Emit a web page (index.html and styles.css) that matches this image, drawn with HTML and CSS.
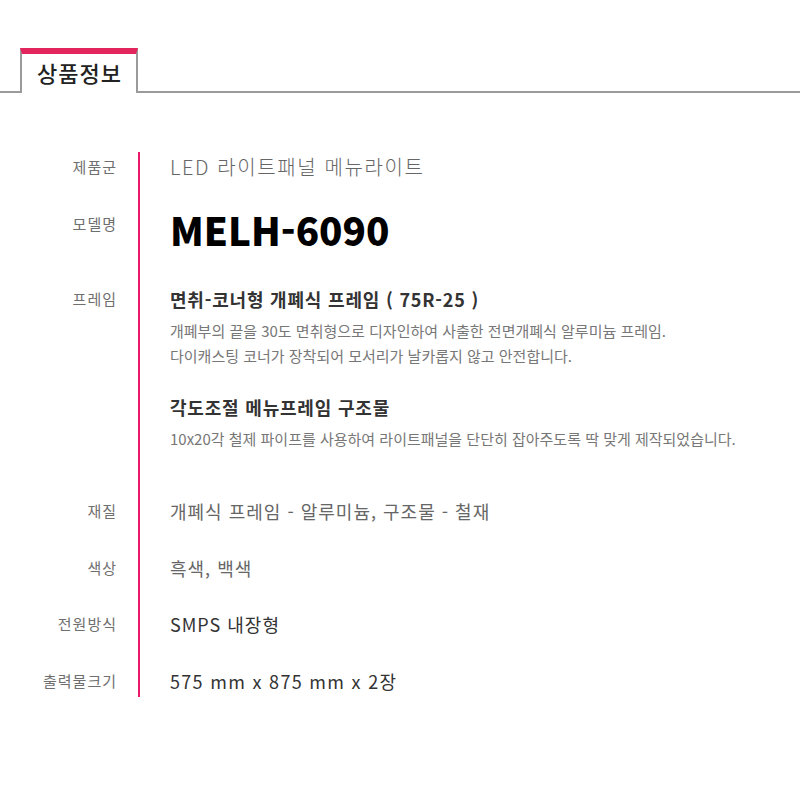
FILE: index.html
```html
<!DOCTYPE html>
<html lang="ko">
<head>
<meta charset="utf-8">
<title>상품정보</title>
<link rel="stylesheet" href="styles.css">
</head>
<body>
<div class="tabs">
  <div class="tab-line short"></div>
  <div class="tab">상품정보</div>
  <div class="tab-line"></div>
</div>

<div class="specs">
  <div class="row r1">
    <div class="label">제품군</div>
    <div class="value light">LED 라이트패널 메뉴라이트</div>
  </div>
  <div class="row r2">
    <div class="label">모델명</div>
    <div class="value model">MELH-6090</div>
  </div>
  <div class="row r3">
    <div class="label">프레임</div>
    <div class="value">
      <div class="sub-title">면취-코너형 개폐식 프레임 ( 75R-25 )</div>
      <p class="desc">개폐부의 끝을 30도 면취형으로 디자인하여 사출한 전면개폐식 알루미늄 프레임.<br>다이캐스팅 코너가 장착되어 모서리가 날카롭지 않고 안전합니다.</p>
      <div class="sub-title second">각도조절 메뉴프레임 구조물</div>
      <p class="desc">10x20각 철제 파이프를 사용하여 라이트패널을 단단히 잡아주도록 딱 맞게 제작되었습니다.</p>
    </div>
  </div>
  <div class="row r4">
    <div class="label">재질</div>
    <div class="value plain">개폐식 프레임 - 알루미늄, 구조물 - 철재</div>
  </div>
  <div class="row r5">
    <div class="label">색상</div>
    <div class="value plain">흑색, 백색</div>
  </div>
  <div class="row r6">
    <div class="label">전원방식</div>
    <div class="value plain dark">SMPS 내장형</div>
  </div>
  <div class="row r7">
    <div class="label">출력물크기</div>
    <div class="value plain dark size">575 mm x 875 mm x 2장</div>
  </div>
</div>
</body>
</html>
```

FILE: styles.css
```css
html, body {
  margin: 0;
  padding: 0;
  background: #fff;
}

body {
  font-family: "Noto Sans CJK KR", "Noto Sans", sans-serif;
  color: #333;
}

.tabs {
  display: flex;
  align-items: flex-end;
  padding-top: 48px;
}

.tab-line {
  flex: 1;
  height: 2px;
  background: #9a9a9a;
}

.tab-line.short {
  flex: 0 0 20px;
}

.tab {
  box-sizing: border-box;
  width: 118px;
  height: 45px;
  border-top: 6px solid #e4265f;
  border-left: 2px solid #9a9a9a;
  border-right: 2px solid #9a9a9a;
  text-align: center;
  font-size: 22px;
  font-weight: 500;
  line-height: 36px;
  color: #222;
  letter-spacing: 1px;
  text-indent: 1px;
}

.specs {
  margin-top: 59px;
}

.row {
  display: grid;
  grid-template-columns: 138px 1fr;
}

.label {
  text-align: right;
  padding-right: 21px;
  font-size: 15px;
  line-height: 30px;
  color: #6f6f6f;
  letter-spacing: 1px;
}

.value {
  border-left: 2px solid #e8196b;
  padding-left: 30px;
  font-size: 18px;
  line-height: 30px;
  color: #666;
  letter-spacing: 1px;
}

.value.light {
  font-size: 20px;
  font-weight: 300;
  color: #666;
  letter-spacing: 1.6px;
}

.value.model {
  font-size: 38.5px;
  font-weight: 900;
  line-height: 50px;
  color: #000;
  letter-spacing: 0;
}

.value.dark {
  color: #333;
}

.value.size {
  letter-spacing: 1.3px;
}

.sub-title {
  font-size: 18px;
  font-weight: 700;
  line-height: 26px;
  color: #333;
  letter-spacing: 0.8px;
}

.sub-title.second {
  margin-top: 26px;
}

.desc {
  margin: 6px 0 0;
  font-size: 15px;
  line-height: 25px;
  color: #777;
  letter-spacing: 0;
}

/* vertical rhythm */
.r2 .value { padding-top: 22px; }
.r2 .label { padding-top: 27px; }
.r3 .value { padding-top: 32px; }
.r3 .label { padding-top: 30px; }
.r4 .value, .r4 .label { padding-top: 45px; }
.r5 .value, .r5 .label { padding-top: 27px; }
.r6 .value, .r6 .label { padding-top: 26px; }
.r7 .value, .r7 .label { padding-top: 27px; padding-bottom: 1px; }
```
